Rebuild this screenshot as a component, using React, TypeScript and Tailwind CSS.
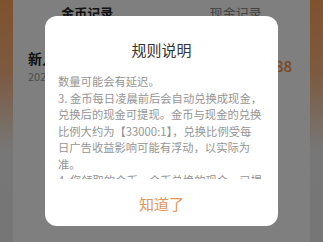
export default function App() {
  const lines = [
    "数量可能会有延迟。",
    "3. 金币每日凌晨前后会自动兑换成现金，",
    "兑换后的现金可提现。金币与现金的兑换",
    "比例大约为【33000:1】，兑换比例受每",
    "日广告收益影响可能有浮动，以实际为",
    "准。",
    "4. 您领取的金币，金币兑换的现金，已提",
    "现的金额均会在记录中展示。",
  ];
  return (
    <div className="relative w-[323px] h-[242px] overflow-hidden font-['Noto_Sans_CJK_SC','Noto_Sans',sans-serif]">
      {/* underlying page */}
      <div className="h-full px-[13px] bg-[linear-gradient(180deg,#ffa55e_0%,#f9b580_30%,#eeeeee_62%,#ececec_100%)]">
        <div className="h-full bg-white">
          <div className="grid grid-cols-2 h-[25px] items-center text-center text-[13px] leading-none">
            <div className="font-bold text-[#222]">金币记录</div>
            <div className="text-[#888]">现金记录</div>
          </div>
          <div className="flex items-center justify-between pt-[23px] pl-[15px] pr-[18px]">
            <div className="flex flex-col">
              <div className="text-[14px] leading-[20px] font-bold text-[#222]">新人福利奖励</div>
              <div className="text-[11px] leading-[16px] text-[#999]">2021-08-16 10:21:35</div>
            </div>
            <div className="text-[15px] font-medium text-[#f5893a]">+88</div>
          </div>
        </div>
      </div>

      {/* overlay */}
      <div className="absolute inset-0 bg-black/50 flex items-center justify-center">
        <div className="w-[233px] h-[210px] rounded-[12px] bg-white flex flex-col">
          <div className="pt-[22px] text-center text-[15px] leading-[24px] text-[#333]">规则说明</div>
          <div className="mt-[11px] h-[106px] overflow-hidden px-[13px] text-[11.3px] leading-[16.5px] text-[#959595]">
            {lines.map((l, i) => (
              <div key={i} className="whitespace-nowrap">{l}</div>
            ))}
          </div>
          <div className="flex-1 flex items-center justify-center pt-[3px] text-[15px] leading-[22px] text-[#e6955a]">
            知道了
          </div>
        </div>
      </div>
    </div>
  );
}
